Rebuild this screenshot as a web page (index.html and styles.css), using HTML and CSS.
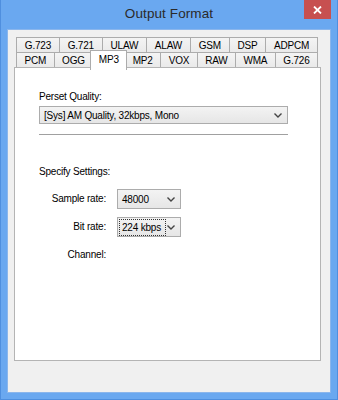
FILE: index.html
```html
<!DOCTYPE html>
<html lang="en">
<head>
    <meta charset="UTF-8">
    <meta name="viewport" content="width=device-width, initial-scale=1.0">
    <title>Output Format</title>
    <link rel="stylesheet" href="styles.css">
</head>
<body>
    <div class="window">
        <div class="titlebar">
            <span></span>
            <span class="title">Output Format</span>
            <button class="close" aria-label="Close">
                <svg width="9" height="8" viewBox="0 0 9 8">
                    <path d="M1 0.5 L8 7.5 M8 0.5 L1 7.5" stroke="#fff" stroke-width="1.8"/>
                </svg>
            </button>
        </div>

        <div class="client">
            <div class="tabs">
                <div class="tab-row">
                    <div class="tab">G.723</div>
                    <div class="tab">G.721</div>
                    <div class="tab">ULAW</div>
                    <div class="tab">ALAW</div>
                    <div class="tab">GSM</div>
                    <div class="tab">DSP</div>
                    <div class="tab">ADPCM</div>
                </div>
                <div class="tab-row front">
                    <div class="tab">PCM</div>
                    <div class="tab">OGG</div>
                    <div class="tab active">MP3</div>
                    <div class="tab">MP2</div>
                    <div class="tab">VOX</div>
                    <div class="tab">RAW</div>
                    <div class="tab">WMA</div>
                    <div class="tab">G.726</div>
                </div>
            </div>

            <div class="panel">
                <div class="label">Perset Quality:</div>
                <div class="combo wide">
                    <span class="combo-text">[Sys] AM Quality, 32kbps, Mono</span>
                    <svg class="chevron" width="8" height="5" viewBox="0 0 8 5">
                        <path d="M0.5 0.5 L4 4 L7.5 0.5" fill="none" stroke="#444" stroke-width="1.4"/>
                    </svg>
                </div>
                <div class="separator"></div>

                <div class="label section">Specify Settings:</div>
                <div class="settings">
                    <span class="field-label">Sample rate:</span>
                    <div class="combo small">
                        <span class="combo-text">48000</span>
                        <svg class="chevron" width="8" height="5" viewBox="0 0 8 5">
                            <path d="M0.5 0.5 L4 4 L7.5 0.5" fill="none" stroke="#444" stroke-width="1.4"/>
                        </svg>
                    </div>

                    <span class="field-label">Bit rate:</span>
                    <div class="combo small">
                        <span class="combo-text focused">224 kbps</span>
                        <svg class="chevron" width="8" height="5" viewBox="0 0 8 5">
                            <path d="M0.5 0.5 L4 4 L7.5 0.5" fill="none" stroke="#444" stroke-width="1.4"/>
                        </svg>
                    </div>

                    <span class="field-label">Channel:</span>
                    <span></span>
                </div>
            </div>
        </div>
    </div>
</body>
</html>
```

FILE: styles.css
```css
body {
    margin: 0;
    padding: 0;
    font-family: "Liberation Sans", Arial, sans-serif;
    font-size: 10px;
    color: #000;
    background-color: #6aa8f0;
}

.window {
    width: 338px;
    height: 400px;
    box-sizing: border-box;
    background-color: #6aa8f0;
    border: 1px solid #4f8fdf;
    border-top: none;
    padding: 0 6px 6px 6px;
    display: flex;
    flex-direction: column;
}

.titlebar {
    height: 29px;
    display: grid;
    grid-template-columns: 1fr auto 1fr;
    align-items: start;
}

.title {
    font-size: 13.5px;
    color: #2a2a2a;
    line-height: 27px;
    letter-spacing: 0.1px;
}

.close {
    justify-self: end;
    width: 27px;
    height: 19px;
    border: none;
    padding: 0;
    margin: 0;
    background-color: #c75050;
    display: flex;
    align-items: center;
    justify-content: center;
}

.client {
    flex: 1;
    background-color: #f0f0f0;
    border: 1px solid #8bb6ec;
    padding: 7px 9px 0 6px;
}

/* tabs */
.tabs {
    margin-left: 2px;
    width: 302px;
}

.tab-row {
    display: flex;
    height: 16px;
}

.tab-row.front {
    margin-top: -1px;
}

.tab {
    flex: 1 1 auto;
    text-align: center;
    line-height: 15px;
    padding: 0 6px;
    border: 1px solid #acacac;
    border-bottom: none;
    margin-left: -1px;
    background: linear-gradient(#f4f4f4, #e9e9e9);
    letter-spacing: -0.2px;
}

.tab:first-child {
    margin-left: 0;
}

.tab.active {
    position: relative;
    z-index: 2;
    background: #fff;
    margin: -2px -2px -1px -3px;
    line-height: 17px;
    height: 19px;
}

.panel {
    position: relative;
    z-index: 1;
    margin-top: -1px;
    height: 294px;
    width: 307px;
    box-sizing: border-box;
    background-color: #fff;
    border: 1px solid #b4b4b4;
    padding: 22px 32px 0 24px;
    letter-spacing: -0.2px;
}

.label {
    line-height: 13px;
}

.label.section {
    margin-top: 30px;
}

.combo {
    display: flex;
    align-items: center;
    justify-content: space-between;
    box-sizing: border-box;
    border: 1px solid #acacac;
    background: linear-gradient(#f3f3f3, #e6e6e6);
    padding: 0 5px 0 3px;
}

.combo.wide {
    margin-top: 3px;
    height: 18px;
}

.combo.small {
    width: 64px;
    height: 20px;
    padding-left: 1px;
}

.combo-text {
    line-height: 13px;
    padding: 1px 1px;
}

.combo.small .combo-text {
    padding: 1px 2px;
    width: 41px;
    border: 1px dotted transparent;
}

.combo-text.focused {
    border: 1px dotted #333 !important;
}

.separator {
    height: 1px;
    background-color: #a0a0a0;
    margin-top: 10px;
}

.settings {
    display: grid;
    grid-template-columns: 67px 64px;
    column-gap: 11px;
    row-gap: 8px;
    margin-top: 11px;
    align-items: center;
}

.field-label {
    text-align: right;
    line-height: 20px;
}
```
